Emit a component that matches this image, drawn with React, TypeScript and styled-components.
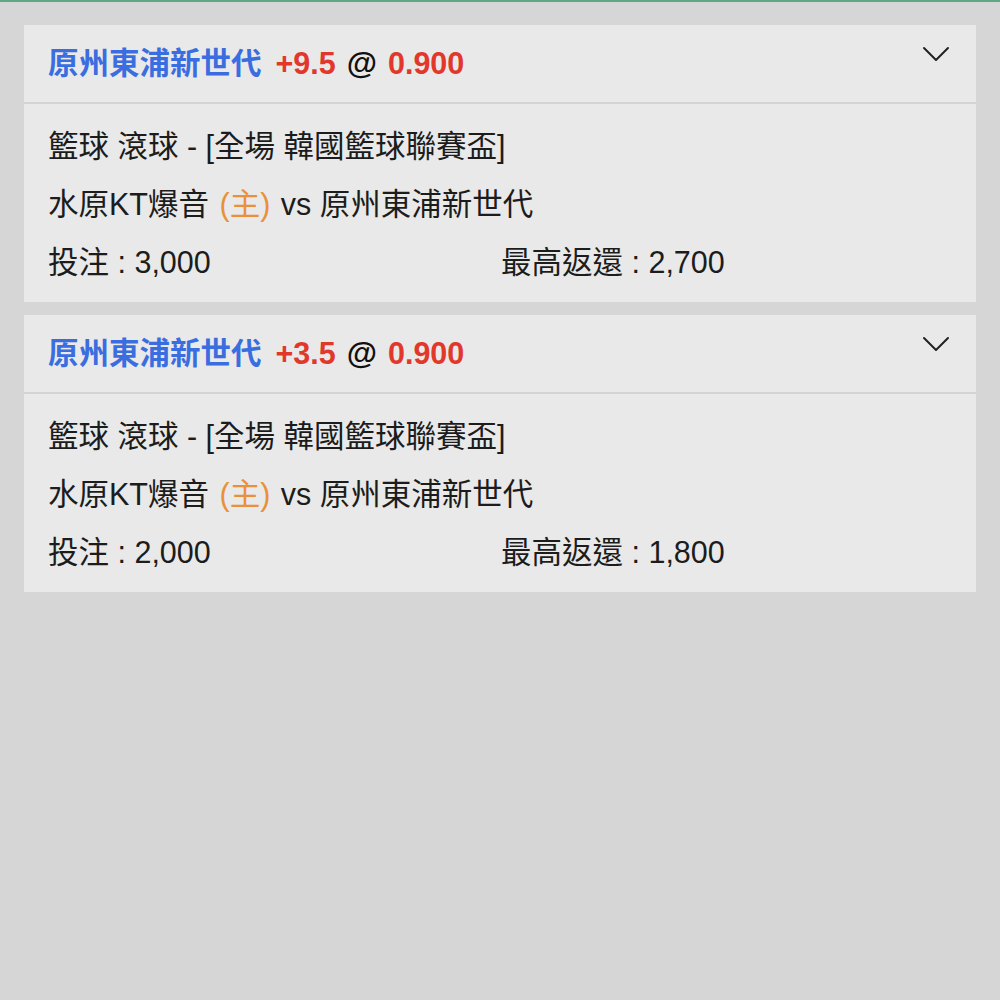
import React from 'react';
import styled, { createGlobalStyle } from 'styled-components';

type Bet = {
  team: string;
  handicap: string;
  odds: string;
  league: string;
  home: string;
  away: string;
  stake: string;
  maxReturn: string;
};

const bets: Bet[] = [
  {
    team: '原州東浦新世代',
    handicap: '+9.5',
    odds: '0.900',
    league: '籃球 滾球 - [全場 韓國籃球聯賽盃]',
    home: '水原KT爆音',
    away: '原州東浦新世代',
    stake: '3,000',
    maxReturn: '2,700',
  },
  {
    team: '原州東浦新世代',
    handicap: '+3.5',
    odds: '0.900',
    league: '籃球 滾球 - [全場 韓國籃球聯賽盃]',
    home: '水原KT爆音',
    away: '原州東浦新世代',
    stake: '2,000',
    maxReturn: '1,800',
  },
];

const Chevron = () => (
  <svg width="28" height="16" viewBox="0 0 28 16" fill="none">
    <path d="M2 2 L14 14 L26 2" stroke="#222" strokeWidth="2" strokeLinecap="round" strokeLinejoin="round" />
  </svg>
);

const App: React.FC = () => (
  <>
    <GlobalStyle />
    <Page>
      {bets.map((bet, i) => (
        <Card key={i}>
          <Header>
            <Title>
              <Team>{bet.team}</Team>
              <Red>{bet.handicap}</Red>
              <At>@</At>
              <Red>{bet.odds}</Red>
            </Title>
            <Toggle>
              <Chevron />
            </Toggle>
          </Header>
          <Body>
            <Line>{bet.league}</Line>
            <Line>
              {bet.home} <Home>(主)</Home> vs {bet.away}
            </Line>
            <Amounts>
              <Line>投注 : {bet.stake}</Line>
              <Line>最高返還 : {bet.maxReturn}</Line>
            </Amounts>
          </Body>
        </Card>
      ))}
    </Page>
  </>
);

export default App;

const GlobalStyle = createGlobalStyle`
  html, body {
    margin: 0;
    padding: 0;
    background: #d6d6d6;
  }
  body {
    font-family: "Liberation Sans", "Noto Sans CJK TC", sans-serif;
    color: #1c1c1c;
  }
`;

const Page = styled.div`
  min-height: 1000px;
  box-sizing: border-box;
  border-top: 2px solid #5fa882;
  padding: 23px 24px 0;
  display: flex;
  flex-direction: column;
  gap: 13px;
`;

const Card = styled.div`
  background: #e9e9e9;
`;

const Header = styled.div`
  height: 77px;
  display: flex;
  align-items: center;
  justify-content: space-between;
  padding: 0 24px;
  border-bottom: 2px solid #d4d4d4;
`;

const Title = styled.div`
  display: flex;
  align-items: baseline;
  gap: 11px;
  font-size: 30.5px;
  font-weight: 700;
  line-height: 1;
`;

const Team = styled.span`
  color: #3a6ee0;
  margin-right: 3px;
`;

const Red = styled.span`
  color: #e2372b;
`;

const At = styled.span`
  color: #111;
  font-size: 31px;
`;

const Toggle = styled.div`
  display: flex;
  align-self: flex-start;
  padding-top: 21px;
  margin-right: 2px;
`;

const Body = styled.div`
  padding: 13px 24px 11px;
  font-size: 30.5px;
  line-height: 58px;
`;

const Line = styled.div`
  white-space: nowrap;
`;

const Home = styled.span`
  color: #e8913a;
  margin: 0 2px;
`;

const Amounts = styled.div`
  display: grid;
  grid-template-columns: 1fr 1fr;
  & > div:last-child {
    padding-left: 1px;
  }
`;
